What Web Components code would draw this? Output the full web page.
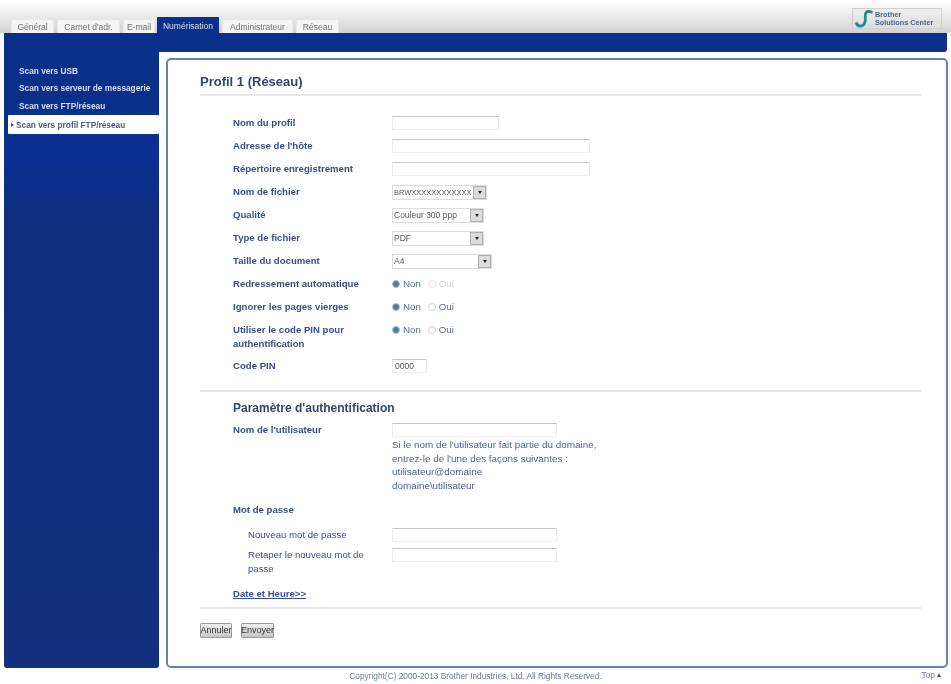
<!DOCTYPE html>
<html lang="fr"><head><meta charset="utf-8"><title>Profil 1</title>
<style>
html,body{margin:0;padding:0;background:#fff}
body{width:951px;height:684px;overflow:hidden;font-family:"Liberation Sans",Arial,sans-serif;filter:blur(.45px)}
</style></head><body>
<bw-app></bw-app>
<script>
const def=(n,css,html)=>{customElements.define(n,class extends HTMLElement{constructor(){super();this.attachShadow({mode:'open'}).innerHTML=`<style>${css}</style>${html}`;}})};

def('bw-tabs',`
:host{display:flex;height:33px;box-sizing:border-box;padding:0 0 0 11px;background:linear-gradient(#fff 0,#f6f6f6 8px,#d2d2d2 33px);position:relative;align-items:flex-end}
span{display:flex;align-items:center;justify-content:center;height:14px;background:#f4f4f4;color:#6f6f6f;font-size:8.500px;box-sizing:border-box;border:1px solid #e6e6e6;border-bottom:0;margin-right:3px;flex:none}
span.on{background:#0b308a;color:#d5def2;height:16px;border-color:#0b308a;border-radius:1px 1px 0 0}
.logo{position:absolute;top:8px;right:9px;width:90px;height:21px;box-sizing:border-box;background:linear-gradient(#efefef,#dcdcdc);border:1px solid #cfcfcf;display:flex;align-items:center;gap:0;padding-left:1px}
.logo svg{width:21px;height:20px;flex:none}
.logo b{display:block;font:700 7.300px/8px "Liberation Sans",sans-serif;color:#4a6488;white-space:nowrap}
`,`<span style="width:43px">Général</span><span style="width:63px">Carnet d'adr.</span><span style="width:32px;margin-right:2px">E-mail</span><span class="on" style="width:62px">Numérisation</span><span style="width:71px">Administrateur</span><span style="width:43px">Réseau</span>
<div class="logo"><svg viewBox="0 0 21 20"><path d="M17.500 3C12.500 1.500 11 3.500 11.300 7.500c.3 4 .2 8-3.500 9.300C5.500 17.500 3.500 16.500 2.500 14.500" fill="none" stroke="#23888f" stroke-width="2.800" stroke-linecap="round"/></svg><div><b>Brother</b><b>Solutions Center</b></div></div>`);

def('bw-nav-item',`
:host{display:flex;align-items:center;height:18px;padding-left:15px;color:#d6dff3;font-size:8.300px;font-weight:700;white-space:nowrap}
:host([active]){background:#fff;color:#4a5a8a;margin-left:4px;padding-left:3px;height:19px;border-radius:1px}
:host([active])::before{content:"";width:0;height:0;border-left:3px solid #33477c;border-top:2px solid transparent;border-bottom:2px solid transparent;margin-right:2px}
`,`<slot></slot>`);

def('bw-sidebar',`
:host{display:flex;flex-direction:column;width:155px;background:linear-gradient(#0b308a 0,#0b308a 102px,#0a2f96 112px,#102f80 190px,#12307e 100%);border-radius:0 0 3px 3px;padding-top:29px;box-sizing:border-box;height:635px;flex:none}
`,`<slot></slot>`);

def('bw-row',`
:host{display:grid;grid-template-columns:159px 1fr;color:#3a4d88;font-size:9.600px;font-weight:700;line-height:14px}
:host([sub]) .l{font-weight:400;padding-left:15px}
.l{padding-right:18px}
.c{font-weight:400}
`,`<div class="l"><slot name="l"></slot></div><div class="c"><slot></slot></div>`);

def('bw-input',`
:host{display:block;height:14px;box-sizing:border-box;background:#fff;border:1px solid #ececec;border-top-color:#c6c6c6;border-bottom-color:#f0f0f0;font:400 8.500px/13px "Liberation Sans",sans-serif;color:#555;padding-left:2px}
`,`<slot></slot>`);

def('bw-select',`
:host{display:flex;height:15px;margin-bottom:-1px;box-sizing:border-box;border:1px solid #dcdcdc;background:#fff;font:400 8.500px/13px "Liberation Sans",sans-serif;color:#555;padding-left:1px;justify-content:space-between;overflow:hidden}
span{overflow:hidden;white-space:nowrap}
i{width:13px;flex:none;background:#dcdcdc;border:1px solid #b0b0b0;box-sizing:border-box;display:flex;align-items:center;justify-content:center}
i::after{content:"";border-top:3px solid #222;border-left:2.500px solid transparent;border-right:2.500px solid transparent}
`,`<span><slot></slot></span><i></i>`);

def('bw-radios',`
:host{display:flex;align-items:center;height:14px;font:400 9.700px/14px "Liberation Sans",sans-serif;color:#5a6a98}
.r{width:8px;height:8px;border-radius:50%;border:1px solid #cfd3d8;box-sizing:border-box;margin:0 3px 0 0;background:#fff}
.r.on{background:#4f7f8f;border-color:#a9c0c8}
.n{margin-right:7px}
:host([disabled]) .o{color:#d2d6e0}
:host([disabled]) .off{border-color:#e4e4e4}
`,`<span class="r on"></span><span class="n">Non</span><span class="r off"></span><span class="o">Oui</span>`);

def('bw-btn',`
:host{display:inline-flex;align-items:center;justify-content:center;height:15px;box-sizing:border-box;background:linear-gradient(#eee,#c6c6c6);border:1px solid #9a9a9a;border-radius:1px;font:400 9px/13px "Liberation Sans",sans-serif;color:#333}
`,`<slot></slot>`);

def('bw-form',`
:host{display:block}
h1{font-size:13px;line-height:16px;font-weight:700;color:#33456f;margin:0 0 0 32px;padding:0 0 4px;width:721px;border-bottom:2px solid #e8e9ec}
.rows{padding-left:65px;display:grid;grid-auto-rows:min-content}
hr{border:0;height:2px;background:#e6e6e6;margin:0 0 0 32px;width:721px}
h2{font-size:12px;line-height:14px;font-weight:700;color:#33456f;margin:0}
.help{font-size:9.900px;line-height:13.500px;color:#4e5f8e;margin:1px 0 0}
a{color:#3b4ea5;font-size:9.600px;font-weight:700;line-height:14px;text-decoration:underline;display:block}
.btns{display:flex;gap:9px;padding-left:32px}
`,`
<h1>Profil 1 (Réseau)</h1>
<div class="rows" style="margin-top:20px;row-gap:9px">
<bw-row><span slot="l">Nom du profil</span><bw-input style="width:107px"></bw-input></bw-row>
<bw-row><span slot="l">Adresse de l'hôte</span><bw-input style="width:198px"></bw-input></bw-row>
<bw-row><span slot="l">Répertoire enregistrement</span><bw-input style="width:198px"></bw-input></bw-row>
<bw-row><span slot="l">Nom de fichier</span><bw-select style="width:95px;font-size:7.500px">BRWXXXXXXXXXXXX</bw-select></bw-row>
<bw-row><span slot="l">Qualité</span><bw-select style="width:92px">Couleur 300 ppp</bw-select></bw-row>
<bw-row><span slot="l">Type de fichier</span><bw-select style="width:92px">PDF</bw-select></bw-row>
<bw-row><span slot="l">Taille du document</span><bw-select style="width:100px">A4</bw-select></bw-row>
<bw-row><span slot="l">Redressement automatique</span><bw-radios disabled></bw-radios></bw-row>
<bw-row><span slot="l">Ignorer les pages vierges</span><bw-radios></bw-radios></bw-row>
<bw-row><span slot="l">Utiliser le code PIN pour authentification</span><bw-radios></bw-radios></bw-row>
<bw-row style="margin-top:-1px"><span slot="l">Code PIN</span><bw-input style="width:35px">0000</bw-input></bw-row>
</div>
<hr style="margin-top:17px">
<div class="rows" style="margin-top:9px">
<h2>Paramètre d'authentification</h2>
<bw-row style="margin-top:8px"><span slot="l">Nom de l'utilisateur</span><bw-input style="width:165px"></bw-input>
<p class="help">Si le nom de l'utilisateur fait partie du domaine,<br>entrez-le de l'une des façons suivantes :<br>utilisateur@domaine<br>domaine\\utilisateur</p></bw-row>
<bw-row style="margin-top:11px"><span slot="l">Mot de passe</span></bw-row>
<bw-row sub style="margin-top:11px"><span slot="l">Nouveau mot de passe</span><bw-input style="width:165px"></bw-input></bw-row>
<bw-row sub style="margin-top:6px"><span slot="l">Retaper le nouveau mot de passe</span><bw-input style="width:165px"></bw-input></bw-row>
<a href="#" style="margin-top:11px">Date et Heure&gt;&gt;</a>
</div>
<hr style="margin-top:6px">
<div class="btns" style="margin-top:14px"><bw-btn style="width:32px">Annuler</bw-btn><bw-btn style="width:33px">Envoyer</bw-btn></div>
`);

def('bw-panel',`
:host{display:block;position:relative;flex:none;width:782px;margin:25px 0 0 7px;height:610px;box-sizing:border-box;background:#fff;border:2px solid #5f86a8;border-radius:5px;padding-top:14px;box-shadow:0 0 0 6px #fff}
`,`<slot></slot>`);

def('bw-footer',`
:host{display:flex;height:16px;position:relative;justify-content:center;align-items:center;font-size:8.300px;color:#6b7899}
.top{position:absolute;right:10px;top:2px;display:flex;align-items:center;gap:2px}
.top::after{content:"";border-bottom:4px solid #4a5a85;border-left:2.500px solid transparent;border-right:2.500px solid transparent}
`,`<span>Copyright(C) 2000-2013 Brother Industries, Ltd. All Rights Reserved.</span><span class="top">Top</span>`);

def('bw-app',`
:host{display:block;width:951px;height:684px;background:#fff}
.main{display:flex;margin:0 0 0 4px;position:relative;height:635px}
.bar{position:absolute;left:150px;top:0;width:793px;height:19px;background:#0b308a;border-radius:0 0 3px 3px}
`,`<bw-tabs></bw-tabs><div class="main"><div class="bar"></div>
<bw-sidebar style="position:relative"><bw-nav-item>Scan vers USB</bw-nav-item><bw-nav-item style="margin-top:-1px">Scan vers serveur de messagerie</bw-nav-item><bw-nav-item>Scan vers FTP/réseau</bw-nav-item><bw-nav-item active>Scan vers profil FTP/réseau</bw-nav-item></bw-sidebar>
<bw-panel><bw-form></bw-form></bw-panel></div><bw-footer></bw-footer>`);
</script></body></html>
